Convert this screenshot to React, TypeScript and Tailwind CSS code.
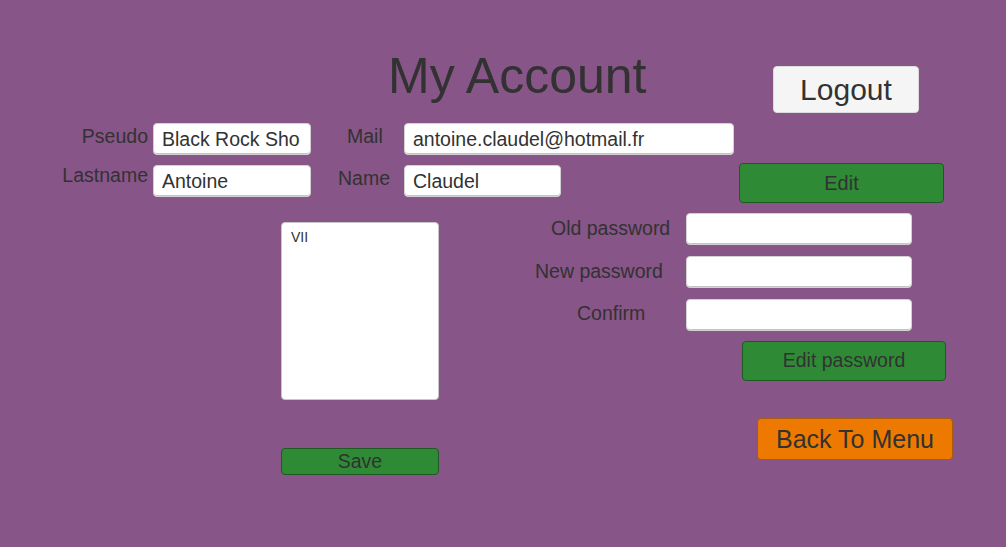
const field =
  "h-[32px] bg-white rounded-[4px] border border-[#d2d2d2] shadow-[inset_0_-1px_0_#c4c4c4] pl-[8px] text-[19.5px] leading-[30px] text-[#323232] whitespace-nowrap overflow-hidden";
const label = "text-[19.5px] leading-[22px] whitespace-nowrap text-[#323232]";
const greenBtn =
  "flex items-center justify-center bg-[#2f8a35] border border-[#1f5a23] rounded-[4px] text-[#323232] leading-none";

export default function App() {
  return (
    <div className="w-[1006px] h-[547px] overflow-hidden bg-[#875587] text-[#323232] font-['Liberation_Sans',Arial,sans-serif]">
      {/* Header */}
      <div className="flex h-[123px]">
        <h1 className="ml-[388px] mt-[51px] w-[385px] text-[50px] leading-none font-normal">
          My Account
        </h1>
        <button className="mt-[66px] w-[146px] h-[47px] flex items-center justify-center bg-[#f5f5f5] border border-[#dcdcdc] rounded-[4px] text-[30px] leading-none">
          Logout
        </button>
      </div>

      {/* Profile fields */}
      <div className="flex items-start h-[90px]">
        <div className="w-[739px]">
          <div className="flex items-start">
            <div className={`${label} w-[153px] mt-[2px] pr-[5px] text-right`}>Pseudo</div>
            <div className={`${field} w-[158px]`}>Black Rock Sho</div>
            <div className={`${label} w-[93px] mt-[2px] pl-[36px]`}>Mail</div>
            <div className={`${field} w-[330px]`}>antoine.claudel@hotmail.fr</div>
          </div>
          <div className="flex items-start mt-[10px]">
            <div className={`${label} w-[153px] -mt-[1px] pr-[5px] text-right`}>Lastname</div>
            <div className={`${field} w-[158px]`}>Antoine</div>
            <div className={`${label} w-[93px] mt-[2px] pl-[27px]`}>Name</div>
            <div className={`${field} w-[157px]`}>Claudel</div>
          </div>
        </div>
        <button className={`${greenBtn} mt-[40px] w-[205px] h-[40px] text-[20px]`}>Edit</button>
      </div>

      {/* Lower part */}
      <div className="flex items-start">
        <div className="ml-[281px] w-[158px] flex flex-col">
          <div className="mt-[9px] h-[178px] bg-white rounded-[4px] border border-[#c8c8c8] pl-[9px] pt-[6px] text-[14px] leading-[16px]">
            VII
          </div>
          <button className={`${greenBtn} mt-[48px] h-[27px] text-[19.5px]`}>Save</button>
        </div>

        <div className="flex flex-col">
          <div className="flex items-start">
            <div className={`${label} w-[247px] mt-[4px] pl-[112px]`}>Old password</div>
            <div className={`${field} w-[226px]`} />
          </div>
          <div className="flex items-start mt-[11px]">
            <div className={`${label} w-[247px] mt-[4px] pl-[96px]`}>New password</div>
            <div className={`${field} w-[226px]`} />
          </div>
          <div className="flex items-start mt-[11px]">
            <div className={`${label} w-[247px] mt-[3px] pl-[138px]`}>Confirm</div>
            <div className={`${field} w-[226px]`} />
          </div>
          <button className={`${greenBtn} ml-[303px] mt-[10px] w-[204px] h-[40px] text-[19.5px]`}>
            Edit password
          </button>
          <button className="ml-[318px] mt-[37px] w-[196px] h-[42px] flex items-center justify-center bg-[#ee7900] border border-[#a85a10] rounded-[4px] text-[25px] leading-none text-[#323232]">
            Back To Menu
          </button>
        </div>
      </div>
    </div>
  );
}
